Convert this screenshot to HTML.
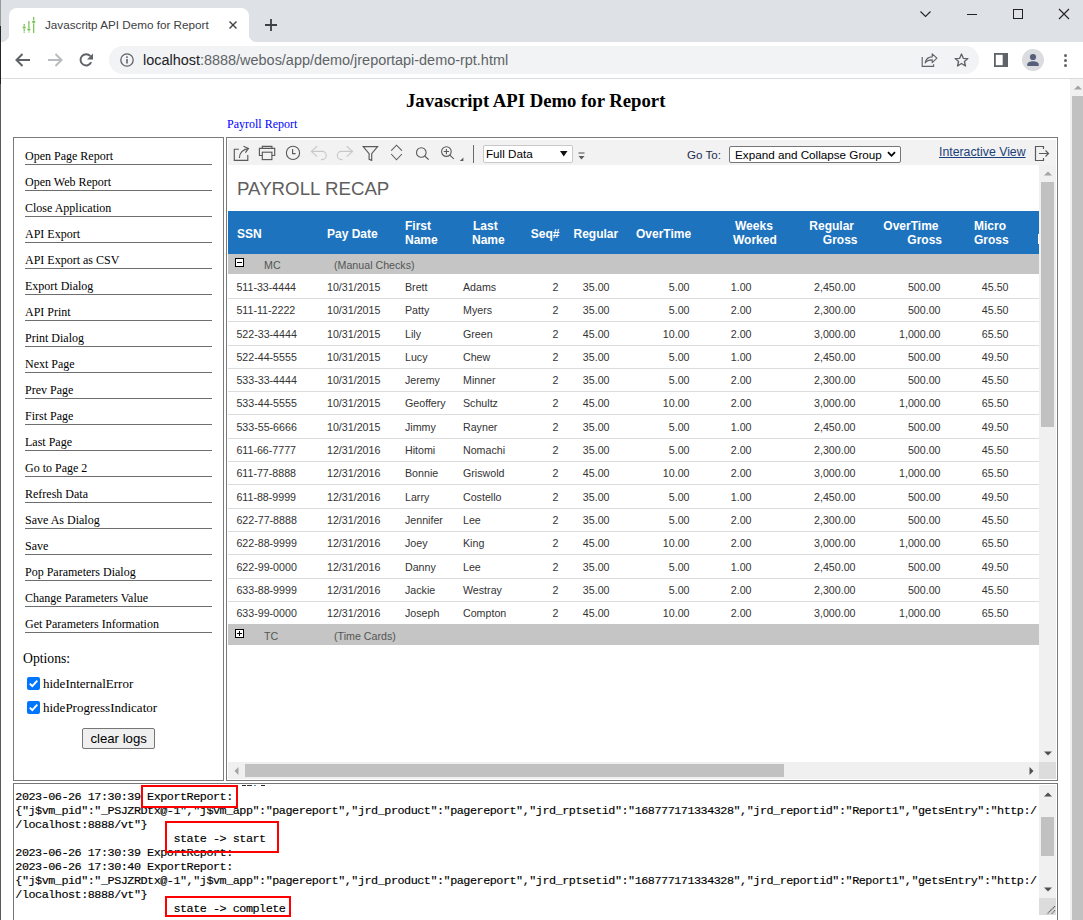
<!DOCTYPE html>
<html><head><meta charset="utf-8"><title>Javascript API Demo for Report</title>
<style>
*{box-sizing:border-box}
html,body{margin:0;padding:0;width:1083px;height:920px;overflow:hidden;background:#fff}
body{position:relative;font-family:"Liberation Sans",sans-serif}
.ab{position:absolute}
.t{position:absolute;white-space:pre;line-height:1}
.serif{font-family:"Liberation Serif",serif}
.mono{font-family:"Liberation Mono",monospace;-webkit-text-stroke:0.15px #000}
svg{position:absolute;overflow:visible}
</style></head><body>

<div class="ab" style="left:0;top:0;width:1083px;height:42px;background:#dee1e6"></div>
<div class="ab" style="left:0;top:42px;width:1083px;height:36px;background:#fff"></div>
<div class="ab" style="left:0;top:78px;width:1083px;height:1px;background:#dadce0"></div>
<div class="ab" style="left:9px;top:8px;width:240px;height:34px;background:#fff;border-radius:8px 8px 0 0"></div>
<div class="ab" style="left:1px;top:34px;width:8px;height:8px;background:radial-gradient(circle at 0 0,#dee1e6 8px,#fff 8.5px)"></div>
<div class="ab" style="left:249px;top:34px;width:8px;height:8px;background:radial-gradient(circle at 100% 0,#dee1e6 8px,#fff 8.5px)"></div>
<svg style="left:22px;top:16px" width="14" height="18" viewBox="0 0 14 18">
<g stroke="#72c04e" stroke-width="1.2" fill="none">
<path d="M2.2 8V10.2M2.2 12.8V15.4M2.2 16.2V17"/>
<path d="M6.9 5V12.2M6.9 14.6V15.6M6.9 16.4V17"/>
<path d="M11.7 1V4.6M11.7 7.2V17"/>
</g>
<g fill="#72c04e"><rect x="0.7" y="10.6" width="3" height="1.8"/><rect x="5.4" y="12.6" width="3" height="1.8"/><rect x="10.2" y="5" width="3" height="1.8"/></g>
</svg>
<div class="t" style="left:45px;top:19px;font-size:11.7px;color:#3c4043">Javascritp API Demo for Report</div>
<svg style="left:229px;top:21px" width="8" height="8" viewBox="0 0 8 8"><path d="M0.5 0.5L7.5 7.5M7.5 0.5L0.5 7.5" stroke="#3c4043" stroke-width="1.4"/></svg>
<svg style="left:265px;top:19px" width="12" height="12" viewBox="0 0 12 12"><path d="M6 0V12M0 6H12" stroke="#3c4043" stroke-width="1.8"/></svg>
<svg style="left:920px;top:10.8px" width="11" height="7" viewBox="0 0 11 7"><path d="M0.5 0.5L5.5 5.5L10.5 0.5" stroke="#202124" stroke-width="1.1" fill="none"/></svg>
<div class="ab" style="left:967px;top:14px;width:10px;height:1px;background:#202124"></div>
<div class="ab" style="left:1013px;top:9px;width:10px;height:10px;border:1px solid #202124"></div>
<svg style="left:1059px;top:9px" width="10" height="10" viewBox="0 0 10 10"><path d="M0 0L10 10M10 0L0 10" stroke="#202124" stroke-width="1.1"/></svg>
<svg style="left:15px;top:53px" width="16" height="14" viewBox="0 0 16 14"><path d="M15 7H2M7.5 1L1.5 7L7.5 13" stroke="#5f6368" stroke-width="2" fill="none"/></svg>
<svg style="left:47px;top:53px" width="16" height="14" viewBox="0 0 16 14"><path d="M1 7H14M8.5 1L14.5 7L8.5 13" stroke="#b9bbbe" stroke-width="2" fill="none"/></svg>
<svg style="left:79px;top:53px" width="15" height="14" viewBox="0 0 15 14"><path d="M12.2 9.2A5.6 5.6 0 1 1 11.4 3.2" stroke="#5f6368" stroke-width="1.9" fill="none"/><path d="M14 0.5V6.5H8Z" fill="#5f6368"/></svg>
<div class="ab" style="left:109px;top:46px;width:870px;height:28px;background:#f1f3f4;border-radius:14px"></div>
<svg style="left:120px;top:53px" width="14" height="14" viewBox="0 0 14 14"><circle cx="7" cy="7" r="6.2" stroke="#5f6368" stroke-width="1.3" fill="none"/><rect x="6.2" y="6" width="1.6" height="4.5" fill="#5f6368"/><rect x="6.2" y="3.4" width="1.6" height="1.6" fill="#5f6368"/></svg>
<div class="t" style="left:143px;top:53.3px;font-size:14.45px;color:#202124">localhost<span style="color:#5f6368">:8888/webos/app/demo/jreportapi-demo-rpt.html</span></div>
<svg style="left:921px;top:53px" width="17" height="15" viewBox="0 0 17 15"><path d="M1.2 3.9V13.3H12.6V11.3" stroke="#5f6368" stroke-width="1.15" fill="none"/><path d="M4.2 9.9C5 5.6 8 3.9 11.2 3.9V0.8L15.9 5.2L11.2 9.6V6.8C8.2 6.8 5.6 7.8 4.2 9.9Z" stroke="#5f6368" stroke-width="1.15" fill="none" stroke-linejoin="round"/></svg>
<svg style="left:954px;top:53px" width="15" height="14" viewBox="0 0 15 14"><path d="M7.5 1L9.3 5.3L13.9 5.6L10.4 8.5L11.5 13L7.5 10.5L3.5 13L4.6 8.5L1.1 5.6L5.7 5.3Z" stroke="#5f6368" stroke-width="1.35" fill="none" stroke-linejoin="round"/></svg>
<svg style="left:994px;top:53px" width="14" height="14" viewBox="0 0 14 14"><rect x="0.9" y="0.9" width="12.2" height="12.2" stroke="#5f6368" stroke-width="1.8" fill="none"/><rect x="8.7" y="1" width="4.4" height="12" fill="#5f6368"/></svg>
<div class="ab" style="left:1022px;top:49px;width:22px;height:22px;border-radius:50%;background:#dadce0"></div>
<svg style="left:1026px;top:52px" width="14" height="14" viewBox="0 0 14 14"><circle cx="7" cy="5" r="3.1" fill="#56607a"/><path d="M1.3 14V12.3C1.3 10.2 4.3 9.2 7 9.2C9.7 9.2 12.7 10.2 12.7 12.3V14Z" fill="#56607a"/></svg>
<div class="ab" style="left:1063.5px;top:53.7px;width:3.4px;height:3.4px;border-radius:50%;background:#5f6368"></div>
<div class="ab" style="left:1063.5px;top:58.7px;width:3.4px;height:3.4px;border-radius:50%;background:#5f6368"></div>
<div class="ab" style="left:1063.5px;top:63.7px;width:3.4px;height:3.4px;border-radius:50%;background:#5f6368"></div>
<div class="ab" style="left:0;top:0;width:1px;height:26px;background:#9a9a9a"></div>
<div class="ab" style="left:0;top:26px;width:1px;height:58px;background:#262626"></div>
<div class="ab" style="left:0;top:84px;width:1px;height:836px;background:#5a5a5a"></div>
<div class="ab" style="left:1070px;top:79px;width:13px;height:841px;background:#f1f1f1"></div>
<div class="ab" style="left:1072px;top:96px;width:11px;height:824px;background:#c1c1c1"></div>
<svg style="left:1074px;top:85px" width="8" height="5" viewBox="0 0 8 5"><path d="M0 4.5L4 0.5L8 4.5Z" fill="#a3a3a3"/></svg>
<div class="t serif" style="left:406px;top:91.5px;font-size:18.72px;font-weight:bold;color:#000">Javascript API Demo for Report</div>
<div class="t serif" style="left:227px;top:117.5px;font-size:12px;color:#0000ff">Payroll Report</div>
<div class="ab" style="left:13px;top:137px;width:211px;height:644px;border:1px solid #7a7a7a"></div>
<div class="t serif" style="left:25px;top:150px;font-size:12px;color:#000">Open Page Report</div>
<div class="ab" style="left:25px;top:164px;width:187px;height:1px;background:#6e6e6e"></div>
<div class="t serif" style="left:25px;top:176px;font-size:12px;color:#000">Open Web Report</div>
<div class="ab" style="left:25px;top:190px;width:187px;height:1px;background:#6e6e6e"></div>
<div class="t serif" style="left:25px;top:202px;font-size:12px;color:#000">Close Application</div>
<div class="ab" style="left:25px;top:216px;width:187px;height:1px;background:#6e6e6e"></div>
<div class="t serif" style="left:25px;top:228px;font-size:12px;color:#000">API Export</div>
<div class="ab" style="left:25px;top:242px;width:187px;height:1px;background:#6e6e6e"></div>
<div class="t serif" style="left:25px;top:254px;font-size:12px;color:#000">API Export as CSV</div>
<div class="ab" style="left:25px;top:268px;width:187px;height:1px;background:#6e6e6e"></div>
<div class="t serif" style="left:25px;top:280px;font-size:12px;color:#000">Export Dialog</div>
<div class="ab" style="left:25px;top:294px;width:187px;height:1px;background:#6e6e6e"></div>
<div class="t serif" style="left:25px;top:306px;font-size:12px;color:#000">API Print</div>
<div class="ab" style="left:25px;top:320px;width:187px;height:1px;background:#6e6e6e"></div>
<div class="t serif" style="left:25px;top:332px;font-size:12px;color:#000">Print Dialog</div>
<div class="ab" style="left:25px;top:346px;width:187px;height:1px;background:#6e6e6e"></div>
<div class="t serif" style="left:25px;top:358px;font-size:12px;color:#000">Next Page</div>
<div class="ab" style="left:25px;top:372px;width:187px;height:1px;background:#6e6e6e"></div>
<div class="t serif" style="left:25px;top:384px;font-size:12px;color:#000">Prev Page</div>
<div class="ab" style="left:25px;top:398px;width:187px;height:1px;background:#6e6e6e"></div>
<div class="t serif" style="left:25px;top:410px;font-size:12px;color:#000">First Page</div>
<div class="ab" style="left:25px;top:424px;width:187px;height:1px;background:#6e6e6e"></div>
<div class="t serif" style="left:25px;top:436px;font-size:12px;color:#000">Last Page</div>
<div class="ab" style="left:25px;top:450px;width:187px;height:1px;background:#6e6e6e"></div>
<div class="t serif" style="left:25px;top:462px;font-size:12px;color:#000">Go to Page 2</div>
<div class="ab" style="left:25px;top:476px;width:187px;height:1px;background:#6e6e6e"></div>
<div class="t serif" style="left:25px;top:488px;font-size:12px;color:#000">Refresh Data</div>
<div class="ab" style="left:25px;top:502px;width:187px;height:1px;background:#6e6e6e"></div>
<div class="t serif" style="left:25px;top:514px;font-size:12px;color:#000">Save As Dialog</div>
<div class="ab" style="left:25px;top:528px;width:187px;height:1px;background:#6e6e6e"></div>
<div class="t serif" style="left:25px;top:540px;font-size:12px;color:#000">Save</div>
<div class="ab" style="left:25px;top:554px;width:187px;height:1px;background:#6e6e6e"></div>
<div class="t serif" style="left:25px;top:566px;font-size:12px;color:#000">Pop Parameters Dialog</div>
<div class="ab" style="left:25px;top:580px;width:187px;height:1px;background:#6e6e6e"></div>
<div class="t serif" style="left:25px;top:592px;font-size:12px;color:#000">Change Parameters Value</div>
<div class="ab" style="left:25px;top:606px;width:187px;height:1px;background:#6e6e6e"></div>
<div class="t serif" style="left:25px;top:618px;font-size:12px;color:#000">Get Parameters Information</div>
<div class="ab" style="left:25px;top:632px;width:187px;height:1px;background:#6e6e6e"></div>
<div class="t serif" style="left:23px;top:652px;font-size:13.7px;color:#000">Options:</div>
<div class="ab" style="left:27px;top:677px;width:13px;height:13px;border-radius:2px;background:#0075ff"></div>
<svg style="left:27px;top:677px" width="13" height="13" viewBox="0 0 13 13"><path d="M2.8 6.6L5.3 9.1L10.3 3.6" stroke="#fff" stroke-width="1.9" fill="none"/></svg>
<div class="t serif" style="left:43px;top:677px;font-size:13px;color:#000">hideInternalError</div>
<div class="ab" style="left:27px;top:701px;width:13px;height:13px;border-radius:2px;background:#0075ff"></div>
<svg style="left:27px;top:701px" width="13" height="13" viewBox="0 0 13 13"><path d="M2.8 6.6L5.3 9.1L10.3 3.6" stroke="#fff" stroke-width="1.9" fill="none"/></svg>
<div class="t serif" style="left:43px;top:701px;font-size:13px;color:#000">hideProgressIndicator</div>
<div class="ab" style="left:82px;top:728px;width:73px;height:21px;background:#efefef;border:1px solid #767676;border-radius:2px"></div>
<div class="t" style="left:90.4px;top:731.8px;font-size:13.2px;color:#000">clear logs</div>
<div class="ab" style="left:226px;top:137px;width:832px;height:644px;border:1px solid #7a7a7a"></div>
<div class="ab" style="left:228px;top:140px;width:828px;height:25px;background:#f2f2f2"></div>
<svg style="left:233px;top:145px" width="17" height="17" viewBox="0 0 17 17"><path d="M5.9 4.2H1.3V15.3H14.8V10" stroke="#5a5a5a" stroke-width="1.15" fill="none"/><path d="M6.4 12.9C6.4 8 10 4.2 15.2 3.6" stroke="#5a5a5a" stroke-width="1.15" fill="none"/><path d="M10.5 1.2L15.5 3.4L12.4 7.6" stroke="#5a5a5a" stroke-width="1.15" fill="none"/></svg>
<svg style="left:258px;top:145px" width="18" height="17" viewBox="0 0 18 17"><path d="M4.3 3.3V1.3H13.9V3.3" stroke="#5a5a5a" stroke-width="1.15" fill="none"/><path d="M4.3 10.5H1.4V3.3H16.7V10.5H13.9" stroke="#5a5a5a" stroke-width="1.15" fill="none"/><rect x="4.3" y="7.2" width="9.6" height="7.4" stroke="#5a5a5a" stroke-width="1.15" fill="none"/></svg>
<svg style="left:285px;top:145px" width="16" height="16" viewBox="0 0 16 16"><circle cx="8" cy="7.9" r="6.6" stroke="#5a5a5a" stroke-width="1.1" fill="none"/><path d="M7.6 3.9V8.6H10.6" stroke="#5a5a5a" stroke-width="1.15" fill="none"/></svg>
<svg style="left:310px;top:145px" width="18" height="16" viewBox="0 0 18 16"><path d="M7.1 1.3L1.4 6.4L7.1 11.6" stroke="#c8c8c8" stroke-width="1.15" fill="none"/><path d="M1.4 6.4H12.2A4.1 4.1 0 0 1 12.2 14.6H11" stroke="#c8c8c8" stroke-width="1.15" fill="none"/></svg>
<svg style="left:336px;top:145px" width="18" height="16" viewBox="0 0 18 16"><path d="M10.8 1.3L16.5 6.4L10.8 11.6" stroke="#c8c8c8" stroke-width="1.15" fill="none"/><path d="M16.5 6.4H5.4A4.1 4.1 0 0 0 5.4 14.6H6.6" stroke="#c8c8c8" stroke-width="1.15" fill="none"/></svg>
<svg style="left:362px;top:145px" width="17" height="17" viewBox="0 0 17 17"><path d="M1.2 1.6H15.6L9.7 8.7V15.3L7.1 14.3V8.7Z" stroke="#5a5a5a" stroke-width="1.15" fill="none" stroke-linejoin="miter"/></svg>
<svg style="left:390px;top:144px" width="13" height="17" viewBox="0 0 13 17"><path d="M1.2 6.7L6.5 1.2L11.9 6.7M1.2 10L6.5 15.8L11.9 10" stroke="#5a5a5a" stroke-width="1.05" fill="none"/></svg>
<svg style="left:415px;top:146px" width="15" height="15" viewBox="0 0 15 15"><circle cx="6.3" cy="6.5" r="4.8" stroke="#5a5a5a" stroke-width="1.1" fill="none"/><path d="M9.7 10L13.7 13.6" stroke="#5a5a5a" stroke-width="1.15"/></svg>
<svg style="left:440px;top:146px" width="15" height="15" viewBox="0 0 15 15"><circle cx="6.4" cy="5.6" r="4.8" stroke="#5a5a5a" stroke-width="1.1" fill="none"/><path d="M9.8 9.1L13.8 12.8" stroke="#5a5a5a" stroke-width="1.15"/><path d="M6.4 3V8.2M3.8 5.5H9" stroke="#5a5a5a" stroke-width="1.1"/></svg>
<svg style="left:459px;top:157px" width="5" height="5" viewBox="0 0 5 5"><path d="M4.4 0.6V4H0.8Z" fill="#5a5a5a"/></svg>
<div class="ab" style="left:473px;top:145px;width:1px;height:18px;background:#6a6a6a"></div>
<div class="ab" style="left:483px;top:145px;width:90px;height:18px;background:#fff;border:1px solid #c8c8c8;border-radius:2px"></div>
<div class="t" style="left:486px;top:148px;font-size:11.67px;color:#000">Full Data</div>
<svg style="left:560px;top:151px" width="8" height="6" viewBox="0 0 8 6"><path d="M0 0H7.5L3.75 5.5Z" fill="#111"/></svg>
<svg style="left:578px;top:152px" width="7" height="8" viewBox="0 0 7 8"><path d="M0.5 1H6.5" stroke="#5a5a5a" stroke-width="1.1"/><path d="M0.5 4H6.5L3.5 7.5Z" fill="#5a5a5a"/></svg>
<div class="t" style="left:687px;top:149px;font-size:11.6px;color:#1c2e4f">Go To:</div>
<div class="ab" style="left:729px;top:146px;width:172px;height:17px;background:#fff;border:1px solid #767676;border-radius:2px"></div>
<div class="t" style="left:735px;top:148.5px;font-size:11.7px;color:#000">Expand and Collapse Group</div>
<svg style="left:887px;top:151px" width="9" height="7" viewBox="0 0 9 7"><path d="M1 1.2L4.5 4.8L8 1.2" stroke="#000" stroke-width="1.8" fill="none"/></svg>
<div class="t" style="left:939px;top:146px;font-size:12.3px;color:#1b3f7a;text-decoration:underline">Interactive View</div>
<svg style="left:1034px;top:145px" width="16" height="17" viewBox="0 0 16 17"><path d="M9.5 4V1.5H1.5V15.5H9.5V13" stroke="#5a5a5a" stroke-width="1.2" fill="none"/><path d="M5 8.5H14.5M11.5 5.5L14.5 8.5L11.5 11.5" stroke="#5a5a5a" stroke-width="1.2" fill="none"/></svg>
<div class="t" style="left:237px;top:179.6px;font-size:18.7px;color:#5e5e5e">PAYROLL RECAP</div>
<div class="ab" style="left:228px;top:211px;width:811px;height:43px;background:#1e73be"></div>
<div class="t" style="left:237px;top:227.5px;font-size:12px;font-weight:bold;color:#fff">SSN</div>
<div class="t" style="left:327px;top:227.5px;font-size:12px;font-weight:bold;color:#fff">Pay Date</div>
<div class="t" style="left:405px;top:219.5px;font-size:12px;font-weight:bold;color:#fff">First</div>
<div class="t" style="left:405px;top:233.5px;font-size:12px;font-weight:bold;color:#fff">Name</div>
<div class="t" style="left:473px;top:219.5px;font-size:12px;font-weight:bold;color:#fff">Last</div>
<div class="t" style="left:472px;top:233.5px;font-size:12px;font-weight:bold;color:#fff">Name</div>
<div class="t" style="right:523.5px;top:227.5px;font-size:12px;font-weight:bold;color:#fff">Seq#</div>
<div class="t" style="left:573.5px;top:227.5px;font-size:12px;font-weight:bold;color:#fff">Regular</div>
<div class="t" style="left:636px;top:227.5px;font-size:12px;font-weight:bold;color:#fff">OverTime</div>
<div class="t" style="left:735px;top:219.5px;font-size:12px;font-weight:bold;color:#fff">Weeks</div>
<div class="t" style="left:733px;top:233.5px;font-size:12px;font-weight:bold;color:#fff">Worked</div>
<div class="t" style="right:229px;top:219.5px;font-size:12px;font-weight:bold;color:#fff">Regular</div>
<div class="t" style="right:225.5px;top:233.5px;font-size:12px;font-weight:bold;color:#fff">Gross</div>
<div class="t" style="right:144.5px;top:219.5px;font-size:12px;font-weight:bold;color:#fff">OverTime</div>
<div class="t" style="right:141px;top:233.5px;font-size:12px;font-weight:bold;color:#fff">Gross</div>
<div class="t" style="left:974px;top:219.5px;font-size:12px;font-weight:bold;color:#fff">Micro</div>
<div class="t" style="left:974px;top:233.5px;font-size:12px;font-weight:bold;color:#fff">Gross</div>
<div class="ab" style="left:1038px;top:234px;width:1px;height:10px;background:#fff"></div>
<div class="ab" style="left:228px;top:254px;width:811px;height:20px;background:#c4c5c4"></div>
<div class="ab" style="left:235px;top:258px;width:9px;height:9px;border:1px solid #000;background:#fff"></div><div class="ab" style="left:237px;top:262px;width:5px;height:1px;background:#000"></div>
<div class="t" style="left:264px;top:260px;font-size:10.67px;color:#555">MC</div>
<div class="t" style="left:334px;top:260px;font-size:10.67px;color:#555">(Manual Checks)</div>
<div class="t" style="left:236.4px;top:281.6px;font-size:10.67px;color:#333">511-33-4444</div>
<div class="t" style="left:327px;top:281.6px;font-size:10.67px;color:#333">10/31/2015</div>
<div class="t" style="left:405px;top:281.6px;font-size:10.67px;color:#333">Brett</div>
<div class="t" style="left:463px;top:281.6px;font-size:10.67px;color:#333">Adams</div>
<div class="t" style="right:524.5px;top:281.6px;font-size:10.67px;color:#333">2</div>
<div class="t" style="right:473.5px;top:281.6px;font-size:10.67px;color:#333">35.00</div>
<div class="t" style="right:393.5px;top:281.6px;font-size:10.67px;color:#333">5.00</div>
<div class="t" style="right:331.5px;top:281.6px;font-size:10.67px;color:#333">1.00</div>
<div class="t" style="right:227.5px;top:281.6px;font-size:10.67px;color:#333">2,450.00</div>
<div class="t" style="right:142.5px;top:281.6px;font-size:10.67px;color:#333">500.00</div>
<div class="t" style="right:74.5px;top:281.6px;font-size:10.67px;color:#333">45.50</div>
<div class="ab" style="left:228px;top:298px;width:811px;height:1px;background:#dcdcdc"></div>
<div class="t" style="left:236.4px;top:304.6px;font-size:10.67px;color:#333">511-11-2222</div>
<div class="t" style="left:327px;top:304.6px;font-size:10.67px;color:#333">10/31/2015</div>
<div class="t" style="left:405px;top:304.6px;font-size:10.67px;color:#333">Patty</div>
<div class="t" style="left:463px;top:304.6px;font-size:10.67px;color:#333">Myers</div>
<div class="t" style="right:524.5px;top:304.6px;font-size:10.67px;color:#333">2</div>
<div class="t" style="right:473.5px;top:304.6px;font-size:10.67px;color:#333">35.00</div>
<div class="t" style="right:393.5px;top:304.6px;font-size:10.67px;color:#333">5.00</div>
<div class="t" style="right:331.5px;top:304.6px;font-size:10.67px;color:#333">2.00</div>
<div class="t" style="right:227.5px;top:304.6px;font-size:10.67px;color:#333">2,300.00</div>
<div class="t" style="right:142.5px;top:304.6px;font-size:10.67px;color:#333">500.00</div>
<div class="t" style="right:74.5px;top:304.6px;font-size:10.67px;color:#333">45.50</div>
<div class="ab" style="left:228px;top:321px;width:811px;height:1px;background:#dcdcdc"></div>
<div class="t" style="left:236.4px;top:328.6px;font-size:10.67px;color:#333">522-33-4444</div>
<div class="t" style="left:327px;top:328.6px;font-size:10.67px;color:#333">10/31/2015</div>
<div class="t" style="left:405px;top:328.6px;font-size:10.67px;color:#333">Lily</div>
<div class="t" style="left:463px;top:328.6px;font-size:10.67px;color:#333">Green</div>
<div class="t" style="right:524.5px;top:328.6px;font-size:10.67px;color:#333">2</div>
<div class="t" style="right:473.5px;top:328.6px;font-size:10.67px;color:#333">45.00</div>
<div class="t" style="right:393.5px;top:328.6px;font-size:10.67px;color:#333">10.00</div>
<div class="t" style="right:331.5px;top:328.6px;font-size:10.67px;color:#333">2.00</div>
<div class="t" style="right:227.5px;top:328.6px;font-size:10.67px;color:#333">3,000.00</div>
<div class="t" style="right:142.5px;top:328.6px;font-size:10.67px;color:#333">1,000.00</div>
<div class="t" style="right:74.5px;top:328.6px;font-size:10.67px;color:#333">65.50</div>
<div class="ab" style="left:228px;top:345px;width:811px;height:1px;background:#dcdcdc"></div>
<div class="t" style="left:236.4px;top:351.6px;font-size:10.67px;color:#333">522-44-5555</div>
<div class="t" style="left:327px;top:351.6px;font-size:10.67px;color:#333">10/31/2015</div>
<div class="t" style="left:405px;top:351.6px;font-size:10.67px;color:#333">Lucy</div>
<div class="t" style="left:463px;top:351.6px;font-size:10.67px;color:#333">Chew</div>
<div class="t" style="right:524.5px;top:351.6px;font-size:10.67px;color:#333">2</div>
<div class="t" style="right:473.5px;top:351.6px;font-size:10.67px;color:#333">35.00</div>
<div class="t" style="right:393.5px;top:351.6px;font-size:10.67px;color:#333">5.00</div>
<div class="t" style="right:331.5px;top:351.6px;font-size:10.67px;color:#333">1.00</div>
<div class="t" style="right:227.5px;top:351.6px;font-size:10.67px;color:#333">2,450.00</div>
<div class="t" style="right:142.5px;top:351.6px;font-size:10.67px;color:#333">500.00</div>
<div class="t" style="right:74.5px;top:351.6px;font-size:10.67px;color:#333">49.50</div>
<div class="ab" style="left:228px;top:368px;width:811px;height:1px;background:#dcdcdc"></div>
<div class="t" style="left:236.4px;top:374.6px;font-size:10.67px;color:#333">533-33-4444</div>
<div class="t" style="left:327px;top:374.6px;font-size:10.67px;color:#333">10/31/2015</div>
<div class="t" style="left:405px;top:374.6px;font-size:10.67px;color:#333">Jeremy</div>
<div class="t" style="left:463px;top:374.6px;font-size:10.67px;color:#333">Minner</div>
<div class="t" style="right:524.5px;top:374.6px;font-size:10.67px;color:#333">2</div>
<div class="t" style="right:473.5px;top:374.6px;font-size:10.67px;color:#333">35.00</div>
<div class="t" style="right:393.5px;top:374.6px;font-size:10.67px;color:#333">5.00</div>
<div class="t" style="right:331.5px;top:374.6px;font-size:10.67px;color:#333">2.00</div>
<div class="t" style="right:227.5px;top:374.6px;font-size:10.67px;color:#333">2,300.00</div>
<div class="t" style="right:142.5px;top:374.6px;font-size:10.67px;color:#333">500.00</div>
<div class="t" style="right:74.5px;top:374.6px;font-size:10.67px;color:#333">45.50</div>
<div class="ab" style="left:228px;top:391px;width:811px;height:1px;background:#dcdcdc"></div>
<div class="t" style="left:236.4px;top:397.6px;font-size:10.67px;color:#333">533-44-5555</div>
<div class="t" style="left:327px;top:397.6px;font-size:10.67px;color:#333">10/31/2015</div>
<div class="t" style="left:405px;top:397.6px;font-size:10.67px;color:#333">Geoffery</div>
<div class="t" style="left:463px;top:397.6px;font-size:10.67px;color:#333">Schultz</div>
<div class="t" style="right:524.5px;top:397.6px;font-size:10.67px;color:#333">2</div>
<div class="t" style="right:473.5px;top:397.6px;font-size:10.67px;color:#333">45.00</div>
<div class="t" style="right:393.5px;top:397.6px;font-size:10.67px;color:#333">10.00</div>
<div class="t" style="right:331.5px;top:397.6px;font-size:10.67px;color:#333">2.00</div>
<div class="t" style="right:227.5px;top:397.6px;font-size:10.67px;color:#333">3,000.00</div>
<div class="t" style="right:142.5px;top:397.6px;font-size:10.67px;color:#333">1,000.00</div>
<div class="t" style="right:74.5px;top:397.6px;font-size:10.67px;color:#333">65.50</div>
<div class="ab" style="left:228px;top:414px;width:811px;height:1px;background:#dcdcdc"></div>
<div class="t" style="left:236.4px;top:421.6px;font-size:10.67px;color:#333">533-55-6666</div>
<div class="t" style="left:327px;top:421.6px;font-size:10.67px;color:#333">10/31/2015</div>
<div class="t" style="left:405px;top:421.6px;font-size:10.67px;color:#333">Jimmy</div>
<div class="t" style="left:463px;top:421.6px;font-size:10.67px;color:#333">Rayner</div>
<div class="t" style="right:524.5px;top:421.6px;font-size:10.67px;color:#333">2</div>
<div class="t" style="right:473.5px;top:421.6px;font-size:10.67px;color:#333">35.00</div>
<div class="t" style="right:393.5px;top:421.6px;font-size:10.67px;color:#333">5.00</div>
<div class="t" style="right:331.5px;top:421.6px;font-size:10.67px;color:#333">1.00</div>
<div class="t" style="right:227.5px;top:421.6px;font-size:10.67px;color:#333">2,450.00</div>
<div class="t" style="right:142.5px;top:421.6px;font-size:10.67px;color:#333">500.00</div>
<div class="t" style="right:74.5px;top:421.6px;font-size:10.67px;color:#333">49.50</div>
<div class="ab" style="left:228px;top:438px;width:811px;height:1px;background:#dcdcdc"></div>
<div class="t" style="left:236.4px;top:444.6px;font-size:10.67px;color:#333">611-66-7777</div>
<div class="t" style="left:327px;top:444.6px;font-size:10.67px;color:#333">12/31/2016</div>
<div class="t" style="left:405px;top:444.6px;font-size:10.67px;color:#333">Hitomi</div>
<div class="t" style="left:463px;top:444.6px;font-size:10.67px;color:#333">Nomachi</div>
<div class="t" style="right:524.5px;top:444.6px;font-size:10.67px;color:#333">2</div>
<div class="t" style="right:473.5px;top:444.6px;font-size:10.67px;color:#333">35.00</div>
<div class="t" style="right:393.5px;top:444.6px;font-size:10.67px;color:#333">5.00</div>
<div class="t" style="right:331.5px;top:444.6px;font-size:10.67px;color:#333">2.00</div>
<div class="t" style="right:227.5px;top:444.6px;font-size:10.67px;color:#333">2,300.00</div>
<div class="t" style="right:142.5px;top:444.6px;font-size:10.67px;color:#333">500.00</div>
<div class="t" style="right:74.5px;top:444.6px;font-size:10.67px;color:#333">45.50</div>
<div class="ab" style="left:228px;top:461px;width:811px;height:1px;background:#dcdcdc"></div>
<div class="t" style="left:236.4px;top:467.6px;font-size:10.67px;color:#333">611-77-8888</div>
<div class="t" style="left:327px;top:467.6px;font-size:10.67px;color:#333">12/31/2016</div>
<div class="t" style="left:405px;top:467.6px;font-size:10.67px;color:#333">Bonnie</div>
<div class="t" style="left:463px;top:467.6px;font-size:10.67px;color:#333">Griswold</div>
<div class="t" style="right:524.5px;top:467.6px;font-size:10.67px;color:#333">2</div>
<div class="t" style="right:473.5px;top:467.6px;font-size:10.67px;color:#333">45.00</div>
<div class="t" style="right:393.5px;top:467.6px;font-size:10.67px;color:#333">10.00</div>
<div class="t" style="right:331.5px;top:467.6px;font-size:10.67px;color:#333">2.00</div>
<div class="t" style="right:227.5px;top:467.6px;font-size:10.67px;color:#333">3,000.00</div>
<div class="t" style="right:142.5px;top:467.6px;font-size:10.67px;color:#333">1,000.00</div>
<div class="t" style="right:74.5px;top:467.6px;font-size:10.67px;color:#333">65.50</div>
<div class="ab" style="left:228px;top:484px;width:811px;height:1px;background:#dcdcdc"></div>
<div class="t" style="left:236.4px;top:491.6px;font-size:10.67px;color:#333">611-88-9999</div>
<div class="t" style="left:327px;top:491.6px;font-size:10.67px;color:#333">12/31/2016</div>
<div class="t" style="left:405px;top:491.6px;font-size:10.67px;color:#333">Larry</div>
<div class="t" style="left:463px;top:491.6px;font-size:10.67px;color:#333">Costello</div>
<div class="t" style="right:524.5px;top:491.6px;font-size:10.67px;color:#333">2</div>
<div class="t" style="right:473.5px;top:491.6px;font-size:10.67px;color:#333">35.00</div>
<div class="t" style="right:393.5px;top:491.6px;font-size:10.67px;color:#333">5.00</div>
<div class="t" style="right:331.5px;top:491.6px;font-size:10.67px;color:#333">1.00</div>
<div class="t" style="right:227.5px;top:491.6px;font-size:10.67px;color:#333">2,450.00</div>
<div class="t" style="right:142.5px;top:491.6px;font-size:10.67px;color:#333">500.00</div>
<div class="t" style="right:74.5px;top:491.6px;font-size:10.67px;color:#333">49.50</div>
<div class="ab" style="left:228px;top:508px;width:811px;height:1px;background:#dcdcdc"></div>
<div class="t" style="left:236.4px;top:514.6px;font-size:10.67px;color:#333">622-77-8888</div>
<div class="t" style="left:327px;top:514.6px;font-size:10.67px;color:#333">12/31/2016</div>
<div class="t" style="left:405px;top:514.6px;font-size:10.67px;color:#333">Jennifer</div>
<div class="t" style="left:463px;top:514.6px;font-size:10.67px;color:#333">Lee</div>
<div class="t" style="right:524.5px;top:514.6px;font-size:10.67px;color:#333">2</div>
<div class="t" style="right:473.5px;top:514.6px;font-size:10.67px;color:#333">35.00</div>
<div class="t" style="right:393.5px;top:514.6px;font-size:10.67px;color:#333">5.00</div>
<div class="t" style="right:331.5px;top:514.6px;font-size:10.67px;color:#333">2.00</div>
<div class="t" style="right:227.5px;top:514.6px;font-size:10.67px;color:#333">2,300.00</div>
<div class="t" style="right:142.5px;top:514.6px;font-size:10.67px;color:#333">500.00</div>
<div class="t" style="right:74.5px;top:514.6px;font-size:10.67px;color:#333">45.50</div>
<div class="ab" style="left:228px;top:531px;width:811px;height:1px;background:#dcdcdc"></div>
<div class="t" style="left:236.4px;top:537.6px;font-size:10.67px;color:#333">622-88-9999</div>
<div class="t" style="left:327px;top:537.6px;font-size:10.67px;color:#333">12/31/2016</div>
<div class="t" style="left:405px;top:537.6px;font-size:10.67px;color:#333">Joey</div>
<div class="t" style="left:463px;top:537.6px;font-size:10.67px;color:#333">King</div>
<div class="t" style="right:524.5px;top:537.6px;font-size:10.67px;color:#333">2</div>
<div class="t" style="right:473.5px;top:537.6px;font-size:10.67px;color:#333">45.00</div>
<div class="t" style="right:393.5px;top:537.6px;font-size:10.67px;color:#333">10.00</div>
<div class="t" style="right:331.5px;top:537.6px;font-size:10.67px;color:#333">2.00</div>
<div class="t" style="right:227.5px;top:537.6px;font-size:10.67px;color:#333">3,000.00</div>
<div class="t" style="right:142.5px;top:537.6px;font-size:10.67px;color:#333">1,000.00</div>
<div class="t" style="right:74.5px;top:537.6px;font-size:10.67px;color:#333">65.50</div>
<div class="ab" style="left:228px;top:554px;width:811px;height:1px;background:#dcdcdc"></div>
<div class="t" style="left:236.4px;top:561.6px;font-size:10.67px;color:#333">622-99-0000</div>
<div class="t" style="left:327px;top:561.6px;font-size:10.67px;color:#333">12/31/2016</div>
<div class="t" style="left:405px;top:561.6px;font-size:10.67px;color:#333">Danny</div>
<div class="t" style="left:463px;top:561.6px;font-size:10.67px;color:#333">Lee</div>
<div class="t" style="right:524.5px;top:561.6px;font-size:10.67px;color:#333">2</div>
<div class="t" style="right:473.5px;top:561.6px;font-size:10.67px;color:#333">35.00</div>
<div class="t" style="right:393.5px;top:561.6px;font-size:10.67px;color:#333">5.00</div>
<div class="t" style="right:331.5px;top:561.6px;font-size:10.67px;color:#333">1.00</div>
<div class="t" style="right:227.5px;top:561.6px;font-size:10.67px;color:#333">2,450.00</div>
<div class="t" style="right:142.5px;top:561.6px;font-size:10.67px;color:#333">500.00</div>
<div class="t" style="right:74.5px;top:561.6px;font-size:10.67px;color:#333">49.50</div>
<div class="ab" style="left:228px;top:578px;width:811px;height:1px;background:#dcdcdc"></div>
<div class="t" style="left:236.4px;top:584.6px;font-size:10.67px;color:#333">633-88-9999</div>
<div class="t" style="left:327px;top:584.6px;font-size:10.67px;color:#333">12/31/2016</div>
<div class="t" style="left:405px;top:584.6px;font-size:10.67px;color:#333">Jackie</div>
<div class="t" style="left:463px;top:584.6px;font-size:10.67px;color:#333">Westray</div>
<div class="t" style="right:524.5px;top:584.6px;font-size:10.67px;color:#333">2</div>
<div class="t" style="right:473.5px;top:584.6px;font-size:10.67px;color:#333">35.00</div>
<div class="t" style="right:393.5px;top:584.6px;font-size:10.67px;color:#333">5.00</div>
<div class="t" style="right:331.5px;top:584.6px;font-size:10.67px;color:#333">2.00</div>
<div class="t" style="right:227.5px;top:584.6px;font-size:10.67px;color:#333">2,300.00</div>
<div class="t" style="right:142.5px;top:584.6px;font-size:10.67px;color:#333">500.00</div>
<div class="t" style="right:74.5px;top:584.6px;font-size:10.67px;color:#333">45.50</div>
<div class="ab" style="left:228px;top:601px;width:811px;height:1px;background:#dcdcdc"></div>
<div class="t" style="left:236.4px;top:607.6px;font-size:10.67px;color:#333">633-99-0000</div>
<div class="t" style="left:327px;top:607.6px;font-size:10.67px;color:#333">12/31/2016</div>
<div class="t" style="left:405px;top:607.6px;font-size:10.67px;color:#333">Joseph</div>
<div class="t" style="left:463px;top:607.6px;font-size:10.67px;color:#333">Compton</div>
<div class="t" style="right:524.5px;top:607.6px;font-size:10.67px;color:#333">2</div>
<div class="t" style="right:473.5px;top:607.6px;font-size:10.67px;color:#333">45.00</div>
<div class="t" style="right:393.5px;top:607.6px;font-size:10.67px;color:#333">10.00</div>
<div class="t" style="right:331.5px;top:607.6px;font-size:10.67px;color:#333">2.00</div>
<div class="t" style="right:227.5px;top:607.6px;font-size:10.67px;color:#333">3,000.00</div>
<div class="t" style="right:142.5px;top:607.6px;font-size:10.67px;color:#333">1,000.00</div>
<div class="t" style="right:74.5px;top:607.6px;font-size:10.67px;color:#333">65.50</div>
<div class="ab" style="left:228px;top:624px;width:811px;height:21px;background:#c4c5c4"></div>
<div class="ab" style="left:235px;top:629px;width:9px;height:9px;border:1px solid #000;background:#fff"></div><div class="ab" style="left:237px;top:633px;width:5px;height:1px;background:#000"></div><div class="ab" style="left:239px;top:631px;width:1px;height:5px;background:#000"></div>
<div class="t" style="left:264px;top:630.5px;font-size:10.67px;color:#555">TC</div>
<div class="t" style="left:334px;top:630.5px;font-size:10.67px;color:#555">(Time Cards)</div>
<div class="ab" style="left:1039px;top:165px;width:17px;height:597px;background:#f0f0f0"></div>
<div class="ab" style="left:1041px;top:182px;width:13px;height:245px;background:#c1c1c1"></div>
<svg style="left:1044px;top:171px" width="8" height="5" viewBox="0 0 8 5"><path d="M0 4.5L4 0.5L8 4.5Z" fill="#a3a3a3"/></svg>
<svg style="left:1044px;top:751px" width="8" height="5" viewBox="0 0 8 5"><path d="M0 0.5H8L4 4.5Z" fill="#505050"/></svg>
<div class="ab" style="left:228px;top:762px;width:811px;height:17px;background:#f0f0f0"></div>
<div class="ab" style="left:1039px;top:762px;width:17px;height:17px;background:#dcdcdc"></div>
<div class="ab" style="left:245px;top:764px;width:539px;height:13px;background:#c1c1c1"></div>
<svg style="left:234px;top:767px" width="5" height="8" viewBox="0 0 5 8"><path d="M4.5 0V8L0.5 4Z" fill="#a3a3a3"/></svg>
<svg style="left:1029px;top:767px" width="5" height="8" viewBox="0 0 5 8"><path d="M0.5 0V8L4.5 4Z" fill="#505050"/></svg>
<div class="ab" style="left:13px;top:783px;width:1045px;height:200px;border:1px solid #767676;background:#fff"></div>
<div class="ab" style="left:14px;top:784px;width:1025px;height:136px;overflow:hidden">
<div class="ab" style="left:228px;top:1px;width:4px;height:1.2px;background:#222"></div><div class="ab" style="left:233px;top:1px;width:5px;height:1.2px;background:#333"></div><div class="ab" style="left:239.5px;top:1px;width:2px;height:1.2px;background:#4a8ad0"></div><div class="ab" style="left:247px;top:1px;width:4px;height:1.2px;background:#222"></div>
<div class="t mono" style="left:1.3px;top:5.6px;font-size:11.8px;letter-spacing:-0.49px;line-height:14px;color:#000">2023-06-26 17:30:39 ExportReport:</div>
<div class="t mono" style="left:1.3px;top:19.6px;font-size:11.8px;letter-spacing:-0.49px;line-height:14px;color:#000">{"j$vm_pid":"_PSJZRDtx@-1","j$vm_app":"pagereport","jrd_product":"pagereport","jrd_rptsetid":"168777171334328","jrd_reportid":"Report1","getsEntry":"http:/</div>
<div class="t mono" style="left:1.3px;top:33.6px;font-size:11.8px;letter-spacing:-0.49px;line-height:14px;color:#000">/localhost:8888/vt"}</div>
<div class="t mono" style="left:1.3px;top:47.6px;font-size:11.8px;letter-spacing:-0.49px;line-height:14px;color:#000">                        state -&gt; start</div>
<div class="t mono" style="left:1.3px;top:61.6px;font-size:11.8px;letter-spacing:-0.49px;line-height:14px;color:#000">2023-06-26 17:30:39 ExportReport:</div>
<div class="t mono" style="left:1.3px;top:75.6px;font-size:11.8px;letter-spacing:-0.49px;line-height:14px;color:#000">2023-06-26 17:30:40 ExportReport:</div>
<div class="t mono" style="left:1.3px;top:89.6px;font-size:11.8px;letter-spacing:-0.49px;line-height:14px;color:#000">{"j$vm_pid":"_PSJZRDtx@-1","j$vm_app":"pagereport","jrd_product":"pagereport","jrd_rptsetid":"168777171334328","jrd_reportid":"Report1","getsEntry":"http:/</div>
<div class="t mono" style="left:1.3px;top:103.6px;font-size:11.8px;letter-spacing:-0.49px;line-height:14px;color:#000">/localhost:8888/vt"}</div>
<div class="t mono" style="left:1.3px;top:117.6px;font-size:11.8px;letter-spacing:-0.49px;line-height:14px;color:#000">                        state -&gt; complete</div>
</div>
<div class="ab" style="left:141px;top:785px;width:97px;height:23px;border:2px solid #ff0000"></div>
<div class="ab" style="left:165px;top:821px;width:114px;height:32px;border:2px solid #ff0000"></div>
<div class="ab" style="left:165px;top:896px;width:126px;height:21px;border:2px solid #ff0000"></div>
<div class="ab" style="left:1039px;top:785px;width:17px;height:113px;background:#f0f0f0"></div>
<div class="ab" style="left:1041px;top:817px;width:13px;height:39px;background:#c1c1c1"></div>
<svg style="left:1044px;top:791.5px" width="8" height="5" viewBox="0 0 8 5"><path d="M0 4.5L4 0.5L8 4.5Z" fill="#505050"/></svg>
<svg style="left:1044px;top:886.5px" width="8" height="5" viewBox="0 0 8 5"><path d="M0 0.5H8L4 4.5Z" fill="#505050"/></svg>
<div class="ab" style="left:1039px;top:898px;width:17px;height:17px;background:#dcdcdc"></div>
<svg style="left:1039px;top:898px" width="17" height="17" viewBox="0 0 17 17"><path d="M16 8.2L8.1 16M16 12.3L12.3 16" stroke="#555" stroke-width="1.1" stroke-dasharray="1.2 0.6"/></svg>
</body></html>
